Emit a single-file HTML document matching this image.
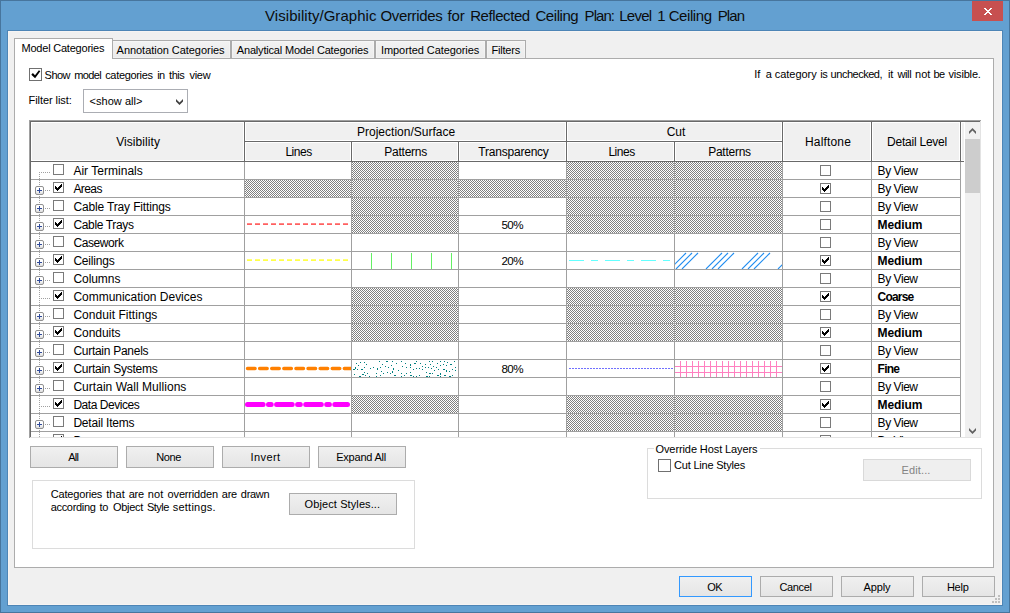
<!DOCTYPE html>
<html><head><meta charset="utf-8"><title>Visibility/Graphic Overrides</title>
<style>
html,body{margin:0;padding:0;}
body{width:1010px;height:613px;overflow:hidden;position:relative;background:#63a0d1;font-family:'Liberation Sans',sans-serif;}
div,span.t,svg{position:absolute;box-sizing:border-box;}
span.t{white-space:nowrap;}

.btn{border:1px solid #acacac;background:linear-gradient(#f0f0f0,#e5e5e5);}
.tab{border:1px solid #acacac;background:linear-gradient(#f2f2f2,#ebebeb);box-shadow:inset 0 0 0 1px rgba(255,255,255,.3);}
.hd{background:#f0f0f0;border:1px solid #fff;}
.ht{background:#808080;}
.cb{border:1px solid #7a7a7a;background:#fff;}

</style></head><body>
<div style="left:0px;top:0px;width:1010px;height:613px;border:1px solid #47759d;"></div>
<span class="t" style="left:265.10px;top:5.80px;font-size:15px;line-height:20px;color:#0c0c0c;letter-spacing:0.044px;">Visibility/Graphic</span>
<span class="t" style="left:380.50px;top:5.80px;font-size:15px;line-height:20px;color:#0c0c0c;letter-spacing:-0.348px;">Overrides</span>
<span class="t" style="left:447.40px;top:5.80px;font-size:15px;line-height:20px;color:#0c0c0c;letter-spacing:-0.105px;">for</span>
<span class="t" style="left:470.20px;top:5.80px;font-size:15px;line-height:20px;color:#0c0c0c;letter-spacing:-0.419px;">Reflected</span>
<span class="t" style="left:535.40px;top:5.80px;font-size:15px;line-height:20px;color:#0c0c0c;letter-spacing:-0.423px;">Ceiling</span>
<span class="t" style="left:584.60px;top:5.80px;font-size:15px;line-height:20px;color:#0c0c0c;letter-spacing:-0.941px;">Plan:</span>
<span class="t" style="left:619.20px;top:5.80px;font-size:15px;line-height:20px;color:#0c0c0c;letter-spacing:-0.712px;">Level</span>
<span class="t" style="left:657.30px;top:5.80px;font-size:15px;line-height:20px;color:#0c0c0c;">1</span>
<span class="t" style="left:668.70px;top:5.80px;font-size:15px;line-height:20px;color:#0c0c0c;letter-spacing:-0.423px;">Ceiling</span>
<span class="t" style="left:717.70px;top:5.80px;font-size:15px;line-height:20px;color:#0c0c0c;letter-spacing:-0.833px;">Plan</span>
<div style="left:972px;top:1px;width:31px;height:20px;background:#c75050;"></div>
<svg style="left:984px;top:8px" width="8" height="7" viewBox="0 0 8 7" shape-rendering="crispEdges" fill="#fff"><rect x="0" y="0" width="2" height="1"/><rect x="6" y="0" width="2" height="1"/><rect x="1" y="1" width="2" height="1"/><rect x="5" y="1" width="2" height="1"/><rect x="2" y="2" width="4" height="1"/><rect x="3" y="3" width="2" height="1"/><rect x="2" y="4" width="4" height="1"/><rect x="1" y="5" width="2" height="1"/><rect x="5" y="5" width="2" height="1"/><rect x="0" y="6" width="2" height="1"/><rect x="6" y="6" width="2" height="1"/></svg>
<div style="left:7px;top:30px;width:996px;height:576px;background:#f0f0f0;border:1px solid #4d85b6;box-shadow:inset 0 0 0 1px #f6f4f3;"></div>
<div style="left:14px;top:58px;width:980px;height:510px;background:#fff;border:1px solid #acacac;"></div>
<div class="tab" style="left:111px;top:40px;width:120px;height:19px"></div>
<span class="t" style="left:116.60px;top:43.19px;font-size:11px;line-height:14px;color:#000;letter-spacing:-0.041px;">Annotation Categories</span>
<div class="tab" style="left:231px;top:40px;width:144px;height:19px"></div>
<span class="t" style="left:236.80px;top:43.19px;font-size:11px;line-height:14px;color:#000;letter-spacing:-0.180px;">Analytical Model Categories</span>
<div class="tab" style="left:375px;top:40px;width:111px;height:19px"></div>
<span class="t" style="left:381.00px;top:43.19px;font-size:11px;line-height:14px;color:#000;letter-spacing:-0.077px;">Imported Categories</span>
<div class="tab" style="left:486px;top:40px;width:40px;height:19px"></div>
<span class="t" style="left:491.50px;top:43.19px;font-size:11px;line-height:14px;color:#000;letter-spacing:-0.208px;">Filters</span>
<div style="left:14px;top:38px;width:99px;height:21px;background:#fff;border:1px solid #acacac;border-bottom:none"></div>
<span class="t" style="left:21.50px;top:41.19px;font-size:11px;line-height:14px;color:#000;letter-spacing:-0.214px;">Model Categories</span>
<div style="left:29px;top:68px;width:13px;height:13px;background:#fff;border:1px solid #707070"></div>
<svg style="left:29px;top:68px" width="13" height="13" viewBox="0 0 13 13"><polygon points="2.3,6.7 3.9,5.0 6,7.3 9.9,2.2 11.3,3.3 6.1,10.2" fill="#000"/></svg>
<span class="t" style="left:44.60px;top:68.19px;font-size:11px;line-height:14px;color:#000;letter-spacing:-0.533px;">Show</span>
<span class="t" style="left:74.30px;top:68.19px;font-size:11px;line-height:14px;color:#000;letter-spacing:-0.654px;">model</span>
<span class="t" style="left:105.20px;top:68.19px;font-size:11px;line-height:14px;color:#000;letter-spacing:-0.327px;">categories</span>
<span class="t" style="left:157.20px;top:68.19px;font-size:11px;line-height:14px;color:#000;letter-spacing:-0.581px;">in</span>
<span class="t" style="left:169.00px;top:68.19px;font-size:11px;line-height:14px;color:#000;letter-spacing:-0.431px;">this</span>
<span class="t" style="left:189.40px;top:68.19px;font-size:11px;line-height:14px;color:#000;letter-spacing:-0.254px;">view</span>
<span class="t" style="left:754.20px;top:67.19px;font-size:11px;line-height:14px;color:#000;letter-spacing:-0.113px;">If</span>
<span class="t" style="left:765.70px;top:67.19px;font-size:11px;line-height:14px;color:#000;">a</span>
<span class="t" style="left:774.70px;top:67.19px;font-size:11px;line-height:14px;color:#000;letter-spacing:-0.025px;">category</span>
<span class="t" style="left:820.30px;top:67.19px;font-size:11px;line-height:14px;color:#000;letter-spacing:-0.377px;">is</span>
<span class="t" style="left:830.60px;top:67.19px;font-size:11px;line-height:14px;color:#000;letter-spacing:-0.477px;">unchecked,</span>
<span class="t" style="left:888.00px;top:67.19px;font-size:11px;line-height:14px;color:#000;letter-spacing:-0.150px;">it</span>
<span class="t" style="left:897.50px;top:67.19px;font-size:11px;line-height:14px;color:#000;letter-spacing:-0.395px;">will</span>
<span class="t" style="left:915.00px;top:67.19px;font-size:11px;line-height:14px;color:#000;letter-spacing:0.068px;">not</span>
<span class="t" style="left:933.60px;top:67.19px;font-size:11px;line-height:14px;color:#000;letter-spacing:-0.625px;">be</span>
<span class="t" style="left:948.50px;top:67.19px;font-size:11px;line-height:14px;color:#000;letter-spacing:-0.178px;">visible.</span>
<span class="t" style="left:28.50px;top:93.19px;font-size:11px;line-height:14px;color:#000;letter-spacing:-0.058px;">Filter list:</span>
<div style="left:83px;top:89px;width:105px;height:24px;background:#fff;border:1px solid #abadb3"></div>
<span class="t" style="left:89.60px;top:94.19px;font-size:11px;line-height:14px;color:#000;letter-spacing:0.021px;">&lt;show all&gt;</span>
<svg style="left:175px;top:97px" width="10" height="10" viewBox="0 0 10 10"><polygon points="1,2 4.5,5.5 8,2 8,4.5 4.5,8 1,4.5" fill="#404040"/></svg>
<div style="left:29px;top:120px;width:953px;height:318px;background:#fff;"></div>
<div style="left:29px;top:120px;width:953px;height:1px;background:#a0a0a0;"></div>
<div style="left:29px;top:121px;width:953px;height:1px;background:#696969;"></div>
<div style="left:29px;top:120px;width:1px;height:318px;background:#a0a0a0;"></div>
<div style="left:30px;top:121px;width:1px;height:317px;background:#696969;"></div>
<div style="left:30px;top:437px;width:951px;height:1px;background:#e3e3e3;"></div>
<div style="left:980px;top:121px;width:1px;height:317px;background:#e3e3e3;"></div>
<div style="left:981px;top:120px;width:1px;height:318px;background:#fff;"></div>
<div style="left:31px;top:122px;width:930px;height:39px;background:#f0f0f0;"></div>
<div style="left:961px;top:122px;width:4px;height:39px;background:#fff;"></div>
<div style="left:962px;top:123px;width:2px;height:37px;background:#f0f0f0;"></div>
<div class="hd" style="left:31px;top:122px;width:213px;height:39px"></div>
<div class="hd" style="left:245px;top:122px;width:321px;height:19px"></div>
<div class="hd" style="left:567px;top:122px;width:215px;height:19px"></div>
<div class="hd" style="left:783px;top:122px;width:88px;height:39px"></div>
<div class="hd" style="left:872px;top:122px;width:88px;height:39px"></div>
<div class="hd" style="left:245px;top:142px;width:106px;height:19px"></div>
<div class="hd" style="left:352px;top:142px;width:106px;height:19px"></div>
<div class="hd" style="left:459px;top:142px;width:107px;height:19px"></div>
<div class="hd" style="left:567px;top:142px;width:107px;height:19px"></div>
<div class="hd" style="left:675px;top:142px;width:107px;height:19px"></div>
<div style="left:245px;top:141px;width:537px;height:1px;background:#696969;"></div>
<div style="left:31px;top:161px;width:933px;height:1px;background:#696969;"></div>
<div style="left:244px;top:122px;width:1px;height:39px;background:#696969;"></div>
<div style="left:566px;top:122px;width:1px;height:39px;background:#696969;"></div>
<div style="left:782px;top:122px;width:1px;height:39px;background:#696969;"></div>
<div style="left:871px;top:122px;width:1px;height:39px;background:#696969;"></div>
<div style="left:960px;top:122px;width:1px;height:39px;background:#696969;"></div>
<div style="left:351px;top:142px;width:1px;height:19px;background:#696969;"></div>
<div style="left:458px;top:142px;width:1px;height:19px;background:#696969;"></div>
<div style="left:674px;top:142px;width:1px;height:19px;background:#696969;"></div>
<span class="t" style="left:116.20px;top:133.84px;font-size:12px;line-height:16px;color:#000;letter-spacing:0.067px;">Visibility</span>
<span class="t" style="left:357.00px;top:123.84px;font-size:12px;line-height:16px;color:#000;letter-spacing:0.008px;">Projection/Surface</span>
<span class="t" style="left:666.65px;top:123.84px;font-size:12px;line-height:16px;color:#000;letter-spacing:0.004px;">Cut</span>
<span class="t" style="left:285.40px;top:143.84px;font-size:12px;line-height:16px;color:#000;letter-spacing:-0.458px;">Lines</span>
<span class="t" style="left:384.35px;top:143.84px;font-size:12px;line-height:16px;color:#000;letter-spacing:-0.250px;">Patterns</span>
<span class="t" style="left:478.35px;top:143.84px;font-size:12px;line-height:16px;color:#000;letter-spacing:-0.218px;">Transparency</span>
<span class="t" style="left:608.40px;top:143.84px;font-size:12px;line-height:16px;color:#000;letter-spacing:-0.458px;">Lines</span>
<span class="t" style="left:708.15px;top:143.84px;font-size:12px;line-height:16px;color:#000;letter-spacing:-0.250px;">Patterns</span>
<span class="t" style="left:805.00px;top:133.84px;font-size:12px;line-height:16px;color:#000;letter-spacing:0.162px;">Halftone</span>
<span class="t" style="left:887.00px;top:133.84px;font-size:12px;line-height:16px;color:#000;letter-spacing:-0.225px;">Detail Level</span>
<div style="left:31px;top:162px;width:930px;height:275px;overflow:hidden">
<div style="left:8px;top:10px;width:1px;height:270px;background-image:linear-gradient(#a0a0a0 50%,transparent 50%);background-size:1px 2px"></div>
<div style="left:0;top:17px;width:930px;height:1px;background:#a0a0a0"></div>
<div style="left:321px;top:0px;width:106px;height:17px;background-image:repeating-conic-gradient(#808080 0% 25%, #fff 0% 50%);background-size:2px 2px;background-position:1px 0px"></div>
<div style="left:536px;top:0px;width:107px;height:17px;background-image:repeating-conic-gradient(#808080 0% 25%, #fff 0% 50%);background-size:2px 2px;background-position:0px 0px"></div>
<div style="left:644px;top:0px;width:107px;height:17px;background-image:repeating-conic-gradient(#808080 0% 25%, #fff 0% 50%);background-size:2px 2px;background-position:0px 0px"></div>
<div style="left:10px;top:10px;width:10px;height:1px;background-image:linear-gradient(90deg,#a0a0a0 50%,transparent 50%);background-size:2px 1px"></div>

<div class="cb" style="left:22px;top:2px;width:11px;height:11px"></div>
<div class="cb" style="left:789px;top:3px;width:11px;height:11px"></div>
<div style="left:0;top:35px;width:930px;height:1px;background:#a0a0a0"></div>
<div style="left:214px;top:18px;width:106px;height:17px;background-image:repeating-conic-gradient(#808080 0% 25%, #fff 0% 50%);background-size:2px 2px;background-position:0px 0px"></div>
<div style="left:321px;top:18px;width:106px;height:17px;background-image:repeating-conic-gradient(#808080 0% 25%, #fff 0% 50%);background-size:2px 2px;background-position:1px 0px"></div>
<div style="left:428px;top:18px;width:107px;height:17px;background-image:repeating-conic-gradient(#808080 0% 25%, #fff 0% 50%);background-size:2px 2px;background-position:0px 0px"></div>
<div style="left:536px;top:18px;width:107px;height:17px;background-image:repeating-conic-gradient(#808080 0% 25%, #fff 0% 50%);background-size:2px 2px;background-position:0px 0px"></div>
<div style="left:644px;top:18px;width:107px;height:17px;background-image:repeating-conic-gradient(#808080 0% 25%, #fff 0% 50%);background-size:2px 2px;background-position:0px 0px"></div>
<div style="left:4px;top:24px;width:9px;height:9px;border:1px solid #919191;border-radius:2px;background:linear-gradient(#fff 40%,#dcdcdc)"></div>
<div style="left:6px;top:28px;width:5px;height:1px;background:#2f4a9a"></div>
<div style="left:8px;top:26px;width:1px;height:5px;background:#2f4a9a"></div>
<div style="left:14px;top:28px;width:6px;height:1px;background-image:linear-gradient(90deg,#a0a0a0 50%,transparent 50%);background-size:2px 1px"></div>

<div class="cb" style="left:22px;top:20px;width:11px;height:11px"></div>
<svg style="left:22px;top:20px" width="11" height="11" viewBox="0 0 11 11" shape-rendering="crispEdges" fill="#000"><rect x="2" y="4" width="1" height="3"/><rect x="3" y="5" width="1" height="3"/><rect x="4" y="6" width="1" height="3"/><rect x="5" y="5" width="1" height="3"/><rect x="6" y="4" width="1" height="3"/><rect x="7" y="3" width="1" height="3"/><rect x="8" y="2" width="1" height="3"/></svg>
<div class="cb" style="left:789px;top:21px;width:11px;height:11px"></div>
<svg style="left:789px;top:21px" width="11" height="11" viewBox="0 0 11 11" shape-rendering="crispEdges" fill="#000"><rect x="2" y="4" width="1" height="3"/><rect x="3" y="5" width="1" height="3"/><rect x="4" y="6" width="1" height="3"/><rect x="5" y="5" width="1" height="3"/><rect x="6" y="4" width="1" height="3"/><rect x="7" y="3" width="1" height="3"/><rect x="8" y="2" width="1" height="3"/></svg>
<div style="left:0;top:53px;width:930px;height:1px;background:#a0a0a0"></div>
<div style="left:321px;top:36px;width:106px;height:17px;background-image:repeating-conic-gradient(#808080 0% 25%, #fff 0% 50%);background-size:2px 2px;background-position:1px 0px"></div>
<div style="left:536px;top:36px;width:107px;height:17px;background-image:repeating-conic-gradient(#808080 0% 25%, #fff 0% 50%);background-size:2px 2px;background-position:0px 0px"></div>
<div style="left:644px;top:36px;width:107px;height:17px;background-image:repeating-conic-gradient(#808080 0% 25%, #fff 0% 50%);background-size:2px 2px;background-position:0px 0px"></div>
<div style="left:4px;top:42px;width:9px;height:9px;border:1px solid #919191;border-radius:2px;background:linear-gradient(#fff 40%,#dcdcdc)"></div>
<div style="left:6px;top:46px;width:5px;height:1px;background:#2f4a9a"></div>
<div style="left:8px;top:44px;width:1px;height:5px;background:#2f4a9a"></div>
<div style="left:14px;top:46px;width:6px;height:1px;background-image:linear-gradient(90deg,#a0a0a0 50%,transparent 50%);background-size:2px 1px"></div>

<div class="cb" style="left:22px;top:38px;width:11px;height:11px"></div>
<div class="cb" style="left:789px;top:39px;width:11px;height:11px"></div>
<div style="left:0;top:71px;width:930px;height:1px;background:#a0a0a0"></div>
<div style="left:321px;top:54px;width:106px;height:17px;background-image:repeating-conic-gradient(#808080 0% 25%, #fff 0% 50%);background-size:2px 2px;background-position:1px 0px"></div>
<div style="left:536px;top:54px;width:107px;height:17px;background-image:repeating-conic-gradient(#808080 0% 25%, #fff 0% 50%);background-size:2px 2px;background-position:0px 0px"></div>
<div style="left:644px;top:54px;width:107px;height:17px;background-image:repeating-conic-gradient(#808080 0% 25%, #fff 0% 50%);background-size:2px 2px;background-position:0px 0px"></div>
<div style="left:4px;top:60px;width:9px;height:9px;border:1px solid #919191;border-radius:2px;background:linear-gradient(#fff 40%,#dcdcdc)"></div>
<div style="left:6px;top:64px;width:5px;height:1px;background:#2f4a9a"></div>
<div style="left:8px;top:62px;width:1px;height:5px;background:#2f4a9a"></div>
<div style="left:14px;top:64px;width:6px;height:1px;background-image:linear-gradient(90deg,#a0a0a0 50%,transparent 50%);background-size:2px 1px"></div>

<div class="cb" style="left:22px;top:56px;width:11px;height:11px"></div>
<svg style="left:22px;top:56px" width="11" height="11" viewBox="0 0 11 11" shape-rendering="crispEdges" fill="#000"><rect x="2" y="4" width="1" height="3"/><rect x="3" y="5" width="1" height="3"/><rect x="4" y="6" width="1" height="3"/><rect x="5" y="5" width="1" height="3"/><rect x="6" y="4" width="1" height="3"/><rect x="7" y="3" width="1" height="3"/><rect x="8" y="2" width="1" height="3"/></svg>
<div class="cb" style="left:789px;top:57px;width:11px;height:11px"></div>
<div style="left:0;top:89px;width:930px;height:1px;background:#a0a0a0"></div>
<div style="left:4px;top:78px;width:9px;height:9px;border:1px solid #919191;border-radius:2px;background:linear-gradient(#fff 40%,#dcdcdc)"></div>
<div style="left:6px;top:82px;width:5px;height:1px;background:#2f4a9a"></div>
<div style="left:8px;top:80px;width:1px;height:5px;background:#2f4a9a"></div>
<div style="left:14px;top:82px;width:6px;height:1px;background-image:linear-gradient(90deg,#a0a0a0 50%,transparent 50%);background-size:2px 1px"></div>

<div class="cb" style="left:22px;top:74px;width:11px;height:11px"></div>
<div class="cb" style="left:789px;top:75px;width:11px;height:11px"></div>
<div style="left:0;top:107px;width:930px;height:1px;background:#a0a0a0"></div>
<div style="left:4px;top:96px;width:9px;height:9px;border:1px solid #919191;border-radius:2px;background:linear-gradient(#fff 40%,#dcdcdc)"></div>
<div style="left:6px;top:100px;width:5px;height:1px;background:#2f4a9a"></div>
<div style="left:8px;top:98px;width:1px;height:5px;background:#2f4a9a"></div>
<div style="left:14px;top:100px;width:6px;height:1px;background-image:linear-gradient(90deg,#a0a0a0 50%,transparent 50%);background-size:2px 1px"></div>

<div class="cb" style="left:22px;top:92px;width:11px;height:11px"></div>
<svg style="left:22px;top:92px" width="11" height="11" viewBox="0 0 11 11" shape-rendering="crispEdges" fill="#000"><rect x="2" y="4" width="1" height="3"/><rect x="3" y="5" width="1" height="3"/><rect x="4" y="6" width="1" height="3"/><rect x="5" y="5" width="1" height="3"/><rect x="6" y="4" width="1" height="3"/><rect x="7" y="3" width="1" height="3"/><rect x="8" y="2" width="1" height="3"/></svg>
<div class="cb" style="left:789px;top:93px;width:11px;height:11px"></div>
<svg style="left:789px;top:93px" width="11" height="11" viewBox="0 0 11 11" shape-rendering="crispEdges" fill="#000"><rect x="2" y="4" width="1" height="3"/><rect x="3" y="5" width="1" height="3"/><rect x="4" y="6" width="1" height="3"/><rect x="5" y="5" width="1" height="3"/><rect x="6" y="4" width="1" height="3"/><rect x="7" y="3" width="1" height="3"/><rect x="8" y="2" width="1" height="3"/></svg>
<div style="left:0;top:125px;width:930px;height:1px;background:#a0a0a0"></div>
<div style="left:4px;top:114px;width:9px;height:9px;border:1px solid #919191;border-radius:2px;background:linear-gradient(#fff 40%,#dcdcdc)"></div>
<div style="left:6px;top:118px;width:5px;height:1px;background:#2f4a9a"></div>
<div style="left:8px;top:116px;width:1px;height:5px;background:#2f4a9a"></div>
<div style="left:14px;top:118px;width:6px;height:1px;background-image:linear-gradient(90deg,#a0a0a0 50%,transparent 50%);background-size:2px 1px"></div>

<div class="cb" style="left:22px;top:110px;width:11px;height:11px"></div>
<div class="cb" style="left:789px;top:111px;width:11px;height:11px"></div>
<div style="left:0;top:143px;width:930px;height:1px;background:#a0a0a0"></div>
<div style="left:321px;top:126px;width:106px;height:17px;background-image:repeating-conic-gradient(#808080 0% 25%, #fff 0% 50%);background-size:2px 2px;background-position:1px 0px"></div>
<div style="left:536px;top:126px;width:107px;height:17px;background-image:repeating-conic-gradient(#808080 0% 25%, #fff 0% 50%);background-size:2px 2px;background-position:0px 0px"></div>
<div style="left:644px;top:126px;width:107px;height:17px;background-image:repeating-conic-gradient(#808080 0% 25%, #fff 0% 50%);background-size:2px 2px;background-position:0px 0px"></div>
<div style="left:10px;top:136px;width:10px;height:1px;background-image:linear-gradient(90deg,#a0a0a0 50%,transparent 50%);background-size:2px 1px"></div>

<div class="cb" style="left:22px;top:128px;width:11px;height:11px"></div>
<svg style="left:22px;top:128px" width="11" height="11" viewBox="0 0 11 11" shape-rendering="crispEdges" fill="#000"><rect x="2" y="4" width="1" height="3"/><rect x="3" y="5" width="1" height="3"/><rect x="4" y="6" width="1" height="3"/><rect x="5" y="5" width="1" height="3"/><rect x="6" y="4" width="1" height="3"/><rect x="7" y="3" width="1" height="3"/><rect x="8" y="2" width="1" height="3"/></svg>
<div class="cb" style="left:789px;top:129px;width:11px;height:11px"></div>
<svg style="left:789px;top:129px" width="11" height="11" viewBox="0 0 11 11" shape-rendering="crispEdges" fill="#000"><rect x="2" y="4" width="1" height="3"/><rect x="3" y="5" width="1" height="3"/><rect x="4" y="6" width="1" height="3"/><rect x="5" y="5" width="1" height="3"/><rect x="6" y="4" width="1" height="3"/><rect x="7" y="3" width="1" height="3"/><rect x="8" y="2" width="1" height="3"/></svg>
<div style="left:0;top:161px;width:930px;height:1px;background:#a0a0a0"></div>
<div style="left:321px;top:144px;width:106px;height:17px;background-image:repeating-conic-gradient(#808080 0% 25%, #fff 0% 50%);background-size:2px 2px;background-position:1px 0px"></div>
<div style="left:536px;top:144px;width:107px;height:17px;background-image:repeating-conic-gradient(#808080 0% 25%, #fff 0% 50%);background-size:2px 2px;background-position:0px 0px"></div>
<div style="left:644px;top:144px;width:107px;height:17px;background-image:repeating-conic-gradient(#808080 0% 25%, #fff 0% 50%);background-size:2px 2px;background-position:0px 0px"></div>
<div style="left:4px;top:150px;width:9px;height:9px;border:1px solid #919191;border-radius:2px;background:linear-gradient(#fff 40%,#dcdcdc)"></div>
<div style="left:6px;top:154px;width:5px;height:1px;background:#2f4a9a"></div>
<div style="left:8px;top:152px;width:1px;height:5px;background:#2f4a9a"></div>
<div style="left:14px;top:154px;width:6px;height:1px;background-image:linear-gradient(90deg,#a0a0a0 50%,transparent 50%);background-size:2px 1px"></div>

<div class="cb" style="left:22px;top:146px;width:11px;height:11px"></div>
<div class="cb" style="left:789px;top:147px;width:11px;height:11px"></div>
<div style="left:0;top:179px;width:930px;height:1px;background:#a0a0a0"></div>
<div style="left:321px;top:162px;width:106px;height:17px;background-image:repeating-conic-gradient(#808080 0% 25%, #fff 0% 50%);background-size:2px 2px;background-position:1px 0px"></div>
<div style="left:536px;top:162px;width:107px;height:17px;background-image:repeating-conic-gradient(#808080 0% 25%, #fff 0% 50%);background-size:2px 2px;background-position:0px 0px"></div>
<div style="left:644px;top:162px;width:107px;height:17px;background-image:repeating-conic-gradient(#808080 0% 25%, #fff 0% 50%);background-size:2px 2px;background-position:0px 0px"></div>
<div style="left:4px;top:168px;width:9px;height:9px;border:1px solid #919191;border-radius:2px;background:linear-gradient(#fff 40%,#dcdcdc)"></div>
<div style="left:6px;top:172px;width:5px;height:1px;background:#2f4a9a"></div>
<div style="left:8px;top:170px;width:1px;height:5px;background:#2f4a9a"></div>
<div style="left:14px;top:172px;width:6px;height:1px;background-image:linear-gradient(90deg,#a0a0a0 50%,transparent 50%);background-size:2px 1px"></div>

<div class="cb" style="left:22px;top:164px;width:11px;height:11px"></div>
<svg style="left:22px;top:164px" width="11" height="11" viewBox="0 0 11 11" shape-rendering="crispEdges" fill="#000"><rect x="2" y="4" width="1" height="3"/><rect x="3" y="5" width="1" height="3"/><rect x="4" y="6" width="1" height="3"/><rect x="5" y="5" width="1" height="3"/><rect x="6" y="4" width="1" height="3"/><rect x="7" y="3" width="1" height="3"/><rect x="8" y="2" width="1" height="3"/></svg>
<div class="cb" style="left:789px;top:165px;width:11px;height:11px"></div>
<svg style="left:789px;top:165px" width="11" height="11" viewBox="0 0 11 11" shape-rendering="crispEdges" fill="#000"><rect x="2" y="4" width="1" height="3"/><rect x="3" y="5" width="1" height="3"/><rect x="4" y="6" width="1" height="3"/><rect x="5" y="5" width="1" height="3"/><rect x="6" y="4" width="1" height="3"/><rect x="7" y="3" width="1" height="3"/><rect x="8" y="2" width="1" height="3"/></svg>
<div style="left:0;top:197px;width:930px;height:1px;background:#a0a0a0"></div>
<div style="left:4px;top:186px;width:9px;height:9px;border:1px solid #919191;border-radius:2px;background:linear-gradient(#fff 40%,#dcdcdc)"></div>
<div style="left:6px;top:190px;width:5px;height:1px;background:#2f4a9a"></div>
<div style="left:8px;top:188px;width:1px;height:5px;background:#2f4a9a"></div>
<div style="left:14px;top:190px;width:6px;height:1px;background-image:linear-gradient(90deg,#a0a0a0 50%,transparent 50%);background-size:2px 1px"></div>

<div class="cb" style="left:22px;top:182px;width:11px;height:11px"></div>
<div class="cb" style="left:789px;top:183px;width:11px;height:11px"></div>
<div style="left:0;top:215px;width:930px;height:1px;background:#a0a0a0"></div>
<div style="left:4px;top:204px;width:9px;height:9px;border:1px solid #919191;border-radius:2px;background:linear-gradient(#fff 40%,#dcdcdc)"></div>
<div style="left:6px;top:208px;width:5px;height:1px;background:#2f4a9a"></div>
<div style="left:8px;top:206px;width:1px;height:5px;background:#2f4a9a"></div>
<div style="left:14px;top:208px;width:6px;height:1px;background-image:linear-gradient(90deg,#a0a0a0 50%,transparent 50%);background-size:2px 1px"></div>

<div class="cb" style="left:22px;top:200px;width:11px;height:11px"></div>
<svg style="left:22px;top:200px" width="11" height="11" viewBox="0 0 11 11" shape-rendering="crispEdges" fill="#000"><rect x="2" y="4" width="1" height="3"/><rect x="3" y="5" width="1" height="3"/><rect x="4" y="6" width="1" height="3"/><rect x="5" y="5" width="1" height="3"/><rect x="6" y="4" width="1" height="3"/><rect x="7" y="3" width="1" height="3"/><rect x="8" y="2" width="1" height="3"/></svg>
<div class="cb" style="left:789px;top:201px;width:11px;height:11px"></div>
<svg style="left:789px;top:201px" width="11" height="11" viewBox="0 0 11 11" shape-rendering="crispEdges" fill="#000"><rect x="2" y="4" width="1" height="3"/><rect x="3" y="5" width="1" height="3"/><rect x="4" y="6" width="1" height="3"/><rect x="5" y="5" width="1" height="3"/><rect x="6" y="4" width="1" height="3"/><rect x="7" y="3" width="1" height="3"/><rect x="8" y="2" width="1" height="3"/></svg>
<div style="left:0;top:233px;width:930px;height:1px;background:#a0a0a0"></div>
<div style="left:4px;top:222px;width:9px;height:9px;border:1px solid #919191;border-radius:2px;background:linear-gradient(#fff 40%,#dcdcdc)"></div>
<div style="left:6px;top:226px;width:5px;height:1px;background:#2f4a9a"></div>
<div style="left:8px;top:224px;width:1px;height:5px;background:#2f4a9a"></div>
<div style="left:14px;top:226px;width:6px;height:1px;background-image:linear-gradient(90deg,#a0a0a0 50%,transparent 50%);background-size:2px 1px"></div>

<div class="cb" style="left:22px;top:218px;width:11px;height:11px"></div>
<div class="cb" style="left:789px;top:219px;width:11px;height:11px"></div>
<div style="left:0;top:251px;width:930px;height:1px;background:#a0a0a0"></div>
<div style="left:321px;top:234px;width:106px;height:17px;background-image:repeating-conic-gradient(#808080 0% 25%, #fff 0% 50%);background-size:2px 2px;background-position:1px 0px"></div>
<div style="left:536px;top:234px;width:107px;height:17px;background-image:repeating-conic-gradient(#808080 0% 25%, #fff 0% 50%);background-size:2px 2px;background-position:0px 0px"></div>
<div style="left:644px;top:234px;width:107px;height:17px;background-image:repeating-conic-gradient(#808080 0% 25%, #fff 0% 50%);background-size:2px 2px;background-position:0px 0px"></div>
<div style="left:10px;top:244px;width:10px;height:1px;background-image:linear-gradient(90deg,#a0a0a0 50%,transparent 50%);background-size:2px 1px"></div>

<div class="cb" style="left:22px;top:236px;width:11px;height:11px"></div>
<svg style="left:22px;top:236px" width="11" height="11" viewBox="0 0 11 11" shape-rendering="crispEdges" fill="#000"><rect x="2" y="4" width="1" height="3"/><rect x="3" y="5" width="1" height="3"/><rect x="4" y="6" width="1" height="3"/><rect x="5" y="5" width="1" height="3"/><rect x="6" y="4" width="1" height="3"/><rect x="7" y="3" width="1" height="3"/><rect x="8" y="2" width="1" height="3"/></svg>
<div class="cb" style="left:789px;top:237px;width:11px;height:11px"></div>
<svg style="left:789px;top:237px" width="11" height="11" viewBox="0 0 11 11" shape-rendering="crispEdges" fill="#000"><rect x="2" y="4" width="1" height="3"/><rect x="3" y="5" width="1" height="3"/><rect x="4" y="6" width="1" height="3"/><rect x="5" y="5" width="1" height="3"/><rect x="6" y="4" width="1" height="3"/><rect x="7" y="3" width="1" height="3"/><rect x="8" y="2" width="1" height="3"/></svg>
<div style="left:0;top:269px;width:930px;height:1px;background:#a0a0a0"></div>
<div style="left:536px;top:252px;width:107px;height:17px;background-image:repeating-conic-gradient(#808080 0% 25%, #fff 0% 50%);background-size:2px 2px;background-position:0px 0px"></div>
<div style="left:644px;top:252px;width:107px;height:17px;background-image:repeating-conic-gradient(#808080 0% 25%, #fff 0% 50%);background-size:2px 2px;background-position:0px 0px"></div>
<div style="left:4px;top:258px;width:9px;height:9px;border:1px solid #919191;border-radius:2px;background:linear-gradient(#fff 40%,#dcdcdc)"></div>
<div style="left:6px;top:262px;width:5px;height:1px;background:#2f4a9a"></div>
<div style="left:8px;top:260px;width:1px;height:5px;background:#2f4a9a"></div>
<div style="left:14px;top:262px;width:6px;height:1px;background-image:linear-gradient(90deg,#a0a0a0 50%,transparent 50%);background-size:2px 1px"></div>

<div class="cb" style="left:22px;top:254px;width:11px;height:11px"></div>
<div class="cb" style="left:789px;top:255px;width:11px;height:11px"></div>
<div style="left:0;top:287px;width:930px;height:1px;background:#a0a0a0"></div>
<div style="left:4px;top:276px;width:9px;height:9px;border:1px solid #919191;border-radius:2px;background:linear-gradient(#fff 40%,#dcdcdc)"></div>
<div style="left:6px;top:280px;width:5px;height:1px;background:#2f4a9a"></div>
<div style="left:8px;top:278px;width:1px;height:5px;background:#2f4a9a"></div>
<div style="left:14px;top:280px;width:6px;height:1px;background-image:linear-gradient(90deg,#a0a0a0 50%,transparent 50%);background-size:2px 1px"></div>

<div class="cb" style="left:22px;top:272px;width:11px;height:11px"></div>
<svg style="left:22px;top:272px" width="11" height="11" viewBox="0 0 11 11" shape-rendering="crispEdges" fill="#000"><rect x="2" y="4" width="1" height="3"/><rect x="3" y="5" width="1" height="3"/><rect x="4" y="6" width="1" height="3"/><rect x="5" y="5" width="1" height="3"/><rect x="6" y="4" width="1" height="3"/><rect x="7" y="3" width="1" height="3"/><rect x="8" y="2" width="1" height="3"/></svg>
<div class="cb" style="left:789px;top:273px;width:11px;height:11px"></div>
<svg style="left:789px;top:273px" width="11" height="11" viewBox="0 0 11 11" shape-rendering="crispEdges" fill="#000"><rect x="2" y="4" width="1" height="3"/><rect x="3" y="5" width="1" height="3"/><rect x="4" y="6" width="1" height="3"/><rect x="5" y="5" width="1" height="3"/><rect x="6" y="4" width="1" height="3"/><rect x="7" y="3" width="1" height="3"/><rect x="8" y="2" width="1" height="3"/></svg>
<div style="left:213px;top:0;width:1px;height:275px;background:#a0a0a0"></div>
<div style="left:320px;top:0;width:1px;height:275px;background:#a0a0a0"></div>
<div style="left:427px;top:0;width:1px;height:275px;background:#a0a0a0"></div>
<div style="left:535px;top:0;width:1px;height:275px;background:#a0a0a0"></div>
<div style="left:643px;top:0;width:1px;height:275px;background:#a0a0a0"></div>
<div style="left:751px;top:0;width:1px;height:275px;background:#a0a0a0"></div>
<div style="left:840px;top:0;width:1px;height:275px;background:#a0a0a0"></div>
<div style="left:929px;top:0;width:1px;height:275px;background:#a0a0a0"></div>
</div>
<span class="t" style="left:73.40px;top:162.84px;font-size:12px;line-height:16px;color:#000;letter-spacing:0.020px;">Air Terminals</span>
<span class="t" style="left:877.60px;top:162.84px;font-size:12px;line-height:16px;color:#000;letter-spacing:-0.449px;">By View</span>
<span class="t" style="left:73.40px;top:180.84px;font-size:12px;line-height:16px;color:#000;letter-spacing:-0.572px;">Areas</span>
<span class="t" style="left:877.60px;top:180.84px;font-size:12px;line-height:16px;color:#000;letter-spacing:-0.449px;">By View</span>
<span class="t" style="left:73.40px;top:198.84px;font-size:12px;line-height:16px;color:#000;letter-spacing:-0.145px;">Cable Tray Fittings</span>
<span class="t" style="left:877.60px;top:198.84px;font-size:12px;line-height:16px;color:#000;letter-spacing:-0.449px;">By View</span>
<span class="t" style="left:73.40px;top:216.84px;font-size:12px;line-height:16px;color:#000;letter-spacing:-0.339px;">Cable Trays</span>
<span class="t" style="left:877.60px;top:216.84px;font-size:12px;line-height:16px;color:#000;font-weight:700;letter-spacing:-0.091px;">Medium</span>
<span class="t" style="left:73.40px;top:234.84px;font-size:12px;line-height:16px;color:#000;letter-spacing:-0.395px;">Casework</span>
<span class="t" style="left:877.60px;top:234.84px;font-size:12px;line-height:16px;color:#000;letter-spacing:-0.449px;">By View</span>
<span class="t" style="left:73.40px;top:252.84px;font-size:12px;line-height:16px;color:#000;letter-spacing:-0.198px;">Ceilings</span>
<span class="t" style="left:877.60px;top:252.84px;font-size:12px;line-height:16px;color:#000;font-weight:700;letter-spacing:-0.091px;">Medium</span>
<span class="t" style="left:73.40px;top:270.84px;font-size:12px;line-height:16px;color:#000;letter-spacing:-0.051px;">Columns</span>
<span class="t" style="left:877.60px;top:270.84px;font-size:12px;line-height:16px;color:#000;letter-spacing:-0.449px;">By View</span>
<span class="t" style="left:73.40px;top:288.84px;font-size:12px;line-height:16px;color:#000;letter-spacing:-0.019px;">Communication Devices</span>
<span class="t" style="left:877.60px;top:288.84px;font-size:12px;line-height:16px;color:#000;font-weight:700;letter-spacing:-0.798px;">Coarse</span>
<span class="t" style="left:73.40px;top:306.84px;font-size:12px;line-height:16px;color:#000;letter-spacing:0.039px;">Conduit Fittings</span>
<span class="t" style="left:877.60px;top:306.84px;font-size:12px;line-height:16px;color:#000;letter-spacing:-0.449px;">By View</span>
<span class="t" style="left:73.40px;top:324.84px;font-size:12px;line-height:16px;color:#000;letter-spacing:-0.047px;">Conduits</span>
<span class="t" style="left:877.60px;top:324.84px;font-size:12px;line-height:16px;color:#000;font-weight:700;letter-spacing:-0.091px;">Medium</span>
<span class="t" style="left:73.40px;top:342.84px;font-size:12px;line-height:16px;color:#000;letter-spacing:-0.273px;">Curtain Panels</span>
<span class="t" style="left:877.60px;top:342.84px;font-size:12px;line-height:16px;color:#000;letter-spacing:-0.449px;">By View</span>
<span class="t" style="left:73.40px;top:360.84px;font-size:12px;line-height:16px;color:#000;letter-spacing:-0.269px;">Curtain Systems</span>
<span class="t" style="left:877.60px;top:360.84px;font-size:12px;line-height:16px;color:#000;font-weight:700;letter-spacing:-0.793px;">Fine</span>
<span class="t" style="left:73.40px;top:378.84px;font-size:12px;line-height:16px;color:#000;letter-spacing:0.035px;">Curtain Wall Mullions</span>
<span class="t" style="left:877.60px;top:378.84px;font-size:12px;line-height:16px;color:#000;letter-spacing:-0.449px;">By View</span>
<span class="t" style="left:73.40px;top:396.84px;font-size:12px;line-height:16px;color:#000;letter-spacing:-0.448px;">Data Devices</span>
<span class="t" style="left:877.60px;top:396.84px;font-size:12px;line-height:16px;color:#000;font-weight:700;letter-spacing:-0.091px;">Medium</span>
<span class="t" style="left:73.40px;top:414.84px;font-size:12px;line-height:16px;color:#000;letter-spacing:-0.197px;">Detail Items</span>
<span class="t" style="left:877.60px;top:414.84px;font-size:12px;line-height:16px;color:#000;letter-spacing:-0.449px;">By View</span>
<span class="t" style="left:73.40px;top:432.84px;font-size:12px;line-height:16px;color:#000;letter-spacing:-0.003px;clip-path:inset(0 0 11.84px 0);">Doors</span>
<span class="t" style="left:877.60px;top:432.84px;font-size:12px;line-height:16px;color:#000;letter-spacing:-0.449px;clip-path:inset(0 0 11.84px 0);">By View</span>
<span class="t" style="left:501.60px;top:217.48px;font-size:11.6px;line-height:15px;color:#000;letter-spacing:-0.673px;">50%</span>
<span class="t" style="left:501.60px;top:253.48px;font-size:11.6px;line-height:15px;color:#000;letter-spacing:-0.673px;">20%</span>
<span class="t" style="left:501.60px;top:361.48px;font-size:11.6px;line-height:15px;color:#000;letter-spacing:-0.673px;">80%</span>
<svg style="left:245px;top:216px" width="106" height="17" viewBox="0 0 106 17"><line x1="2" y1="8.15" x2="103" y2="8.15" stroke="#ff6060" stroke-width="1.7" stroke-dasharray="5 3"/></svg>
<svg style="left:245px;top:252px" width="106" height="17" viewBox="0 0 106 17"><line x1="2" y1="8.15" x2="103" y2="8.15" stroke="#ffff48" stroke-width="1.7" stroke-dasharray="5 3"/></svg>
<svg style="left:352px;top:252px" width="106" height="17" viewBox="0 0 106 17"><line x1="19.5" y1="1" x2="19.5" y2="17" stroke="#64f064" stroke-width="1"/><line x1="39.5" y1="1" x2="39.5" y2="17" stroke="#64f064" stroke-width="1"/><line x1="59.5" y1="1" x2="59.5" y2="17" stroke="#64f064" stroke-width="1"/><line x1="79.5" y1="1" x2="79.5" y2="17" stroke="#64f064" stroke-width="1"/><line x1="99.5" y1="1" x2="99.5" y2="17" stroke="#64f064" stroke-width="1"/></svg>
<svg style="left:567px;top:252px" width="107" height="17" viewBox="0 0 107 17"><line x1="2" y1="8.5" x2="103" y2="8.5" stroke="#64ffff" stroke-width="1.15" stroke-dasharray="15 7 7 7"/></svg>
<svg style="left:675px;top:252px" width="107" height="17" viewBox="0 0 107 17"><line x1="-5" y1="17" x2="11" y2="1" stroke="#1e8cf0" stroke-width="1.1"/><line x1="1" y1="17" x2="17" y2="1" stroke="#1e8cf0" stroke-width="1.1"/><line x1="7" y1="17" x2="23" y2="1" stroke="#1e8cf0" stroke-width="1.1"/><line x1="31" y1="17" x2="47" y2="1" stroke="#1e8cf0" stroke-width="1.1"/><line x1="37" y1="17" x2="53" y2="1" stroke="#1e8cf0" stroke-width="1.1"/><line x1="43" y1="17" x2="59" y2="1" stroke="#1e8cf0" stroke-width="1.1"/><line x1="67" y1="17" x2="83" y2="1" stroke="#1e8cf0" stroke-width="1.1"/><line x1="73" y1="17" x2="89" y2="1" stroke="#1e8cf0" stroke-width="1.1"/><line x1="79" y1="17" x2="95" y2="1" stroke="#1e8cf0" stroke-width="1.1"/><line x1="103" y1="17" x2="119" y2="1" stroke="#1e8cf0" stroke-width="1.1"/></svg>
<svg style="left:245px;top:360px" width="106" height="17" viewBox="0 0 106 17"><line x1="2.5" y1="8.5" x2="110" y2="8.5" stroke="#ff8000" stroke-width="3.4" stroke-dasharray="7.6 4.5" stroke-linecap="round"/></svg>
<svg style="left:567px;top:360px" width="107" height="17" viewBox="0 0 107 17"><line x1="2" y1="8.5" x2="106" y2="8.5" stroke="#7070ff" stroke-width="1.2" stroke-dasharray="2 1"/></svg>
<svg style="left:352px;top:360px" width="106" height="17" viewBox="0 0 106 17"><rect x="58" y="15" width="2" height="1" fill="#008080"/><rect x="58" y="7" width="1" height="1" fill="#008080"/><rect x="24" y="16" width="1" height="1" fill="#008080"/><rect x="81" y="6" width="1" height="1" fill="#008080"/><rect x="13" y="15" width="1" height="1" fill="#008080"/><rect x="39" y="5" width="1" height="1" fill="#008080"/><rect x="12" y="2" width="1" height="1" fill="#008080"/><rect x="77" y="13" width="2" height="1" fill="#008080"/><rect x="80" y="1" width="1" height="1" fill="#008080"/><rect x="68" y="3" width="1" height="1" fill="#008080"/><rect x="8" y="2" width="1" height="1" fill="#008080"/><rect x="25" y="8" width="1" height="2" fill="#008080"/><rect x="77" y="1" width="1" height="1" fill="#008080"/><rect x="100" y="15" width="1" height="1" fill="#008080"/><rect x="42" y="15" width="2" height="1" fill="#008080"/><rect x="76" y="7" width="1" height="1" fill="#008080"/><rect x="67" y="8" width="1" height="1" fill="#008080"/><rect x="82" y="10" width="1" height="1" fill="#008080"/><rect x="64" y="1" width="1" height="1" fill="#008080"/><rect x="85" y="3" width="1" height="1" fill="#008080"/><rect x="53" y="3" width="1" height="1" fill="#008080"/><rect x="91" y="9" width="2" height="1" fill="#008080"/><rect x="41" y="8" width="1" height="2" fill="#008080"/><rect x="4" y="3" width="1" height="1" fill="#008080"/><rect x="73" y="4" width="1" height="1" fill="#008080"/><rect x="38" y="13" width="1" height="1" fill="#008080"/><rect x="88" y="1" width="1" height="1" fill="#008080"/><rect x="28" y="7" width="1" height="1" fill="#008080"/><rect x="7" y="16" width="2" height="1" fill="#008080"/><rect x="49" y="13" width="1" height="1" fill="#008080"/><rect x="73" y="7" width="1" height="1" fill="#008080"/><rect x="100" y="9" width="1" height="1" fill="#008080"/><rect x="44" y="3" width="1" height="1" fill="#008080"/><rect x="40" y="11" width="1" height="2" fill="#008080"/><rect x="2" y="14" width="1" height="1" fill="#008080"/><rect x="98" y="4" width="2" height="1" fill="#008080"/><rect x="18" y="8" width="1" height="1" fill="#008080"/><rect x="91" y="4" width="1" height="1" fill="#008080"/><rect x="94" y="5" width="1" height="1" fill="#008080"/><rect x="54" y="13" width="1" height="1" fill="#008080"/><rect x="15" y="13" width="1" height="1" fill="#008080"/><rect x="54" y="7" width="1" height="1" fill="#008080"/><rect x="1" y="9" width="2" height="1" fill="#008080"/><rect x="103" y="10" width="1" height="1" fill="#008080"/><rect x="3" y="7" width="1" height="2" fill="#008080"/><rect x="24" y="13" width="1" height="1" fill="#008080"/><rect x="78" y="4" width="1" height="1" fill="#008080"/><rect x="6" y="5" width="1" height="1" fill="#008080"/><rect x="28" y="15" width="1" height="1" fill="#008080"/><rect x="34" y="1" width="2" height="1" fill="#008080"/><rect x="12" y="7" width="1" height="1" fill="#008080"/><rect x="17" y="16" width="1" height="1" fill="#008080"/><rect x="50" y="6" width="1" height="1" fill="#008080"/><rect x="79" y="8" width="1" height="1" fill="#008080"/><rect x="21" y="7" width="1" height="1" fill="#008080"/><rect x="88" y="13" width="1" height="2" fill="#008080"/><rect x="62" y="3" width="2" height="1" fill="#008080"/><rect x="14" y="4" width="1" height="1" fill="#008080"/><rect x="5" y="9" width="1" height="1" fill="#008080"/><rect x="31" y="13" width="1" height="1" fill="#008080"/><rect x="77" y="16" width="1" height="1" fill="#008080"/><rect x="36" y="7" width="1" height="1" fill="#008080"/><rect x="27" y="1" width="1" height="1" fill="#008080"/><rect x="9" y="9" width="2" height="1" fill="#008080"/><rect x="12" y="12" width="1" height="1" fill="#008080"/><rect x="46" y="10" width="1" height="1" fill="#008080"/><rect x="94" y="10" width="1" height="2" fill="#008080"/><rect x="58" y="12" width="1" height="1" fill="#008080"/><rect x="95" y="2" width="1" height="1" fill="#008080"/><rect x="88" y="16" width="1" height="1" fill="#008080"/><rect x="10" y="14" width="2" height="1" fill="#008080"/><rect x="102" y="1" width="1" height="1" fill="#008080"/><rect x="80" y="13" width="1" height="1" fill="#008080"/><rect x="49" y="1" width="1" height="1" fill="#008080"/><rect x="30" y="4" width="1" height="1" fill="#008080"/><rect x="64" y="16" width="1" height="1" fill="#008080"/><rect x="97" y="11" width="1" height="1" fill="#008080"/><rect x="85" y="15" width="2" height="1" fill="#008080"/><rect x="64" y="8" width="1" height="1" fill="#008080"/><rect x="86" y="9" width="1" height="1" fill="#008080"/><rect x="103" y="7" width="1" height="1" fill="#008080"/><rect x="29" y="11" width="1" height="1" fill="#008080"/><rect x="61" y="9" width="1" height="1" fill="#008080"/><rect x="49" y="16" width="1" height="1" fill="#008080"/><rect x="92" y="15" width="2" height="1" fill="#008080"/><rect x="74" y="12" width="1" height="1" fill="#008080"/><rect x="40" y="1" width="1" height="1" fill="#008080"/><rect x="52" y="15" width="1" height="1" fill="#008080"/><rect x="58" y="4" width="1" height="2" fill="#008080"/><rect x="33" y="6" width="1" height="1" fill="#008080"/><rect x="92" y="1" width="1" height="1" fill="#008080"/><rect x="97" y="16" width="2" height="1" fill="#008080"/><rect x="35" y="12" width="1" height="1" fill="#008080"/><rect x="70" y="6" width="1" height="1" fill="#008080"/><rect x="84" y="7" width="1" height="1" fill="#008080"/><rect x="88" y="5" width="1" height="1" fill="#008080"/><rect x="67" y="15" width="1" height="1" fill="#008080"/><rect x="70" y="9" width="1" height="1" fill="#008080"/><rect x="74" y="16" width="2" height="1" fill="#008080"/><rect x="61" y="16" width="1" height="2" fill="#008080"/></svg>
<svg style="left:675px;top:360px" width="107" height="17" viewBox="0 0 107 17"><line x1="5.5" y1="1" x2="5.5" y2="17" stroke="#ff80c0" stroke-width="1"/><line x1="11.5" y1="1" x2="11.5" y2="17" stroke="#ff80c0" stroke-width="1"/><line x1="17.5" y1="1" x2="17.5" y2="17" stroke="#ff80c0" stroke-width="1"/><line x1="23.5" y1="1" x2="23.5" y2="17" stroke="#ff80c0" stroke-width="1"/><line x1="29.5" y1="1" x2="29.5" y2="17" stroke="#ff80c0" stroke-width="1"/><line x1="35.5" y1="1" x2="35.5" y2="17" stroke="#ff80c0" stroke-width="1"/><line x1="41.5" y1="1" x2="41.5" y2="17" stroke="#ff80c0" stroke-width="1"/><line x1="47.5" y1="1" x2="47.5" y2="17" stroke="#ff80c0" stroke-width="1"/><line x1="53.5" y1="1" x2="53.5" y2="17" stroke="#ff80c0" stroke-width="1"/><line x1="59.5" y1="1" x2="59.5" y2="17" stroke="#ff80c0" stroke-width="1"/><line x1="65.5" y1="1" x2="65.5" y2="17" stroke="#ff80c0" stroke-width="1"/><line x1="71.5" y1="1" x2="71.5" y2="17" stroke="#ff80c0" stroke-width="1"/><line x1="77.5" y1="1" x2="77.5" y2="17" stroke="#ff80c0" stroke-width="1"/><line x1="83.5" y1="1" x2="83.5" y2="17" stroke="#ff80c0" stroke-width="1"/><line x1="89.5" y1="1" x2="89.5" y2="17" stroke="#ff80c0" stroke-width="1"/><line x1="95.5" y1="1" x2="95.5" y2="17" stroke="#ff80c0" stroke-width="1"/><line x1="101.5" y1="1" x2="101.5" y2="17" stroke="#ff80c0" stroke-width="1"/><line x1="0" y1="6.5" x2="107" y2="6.5" stroke="#ff80c0" stroke-width="1"/><line x1="0" y1="12.5" x2="107" y2="12.5" stroke="#ff80c0" stroke-width="1"/></svg>
<svg style="left:245px;top:396px" width="106" height="17" viewBox="0 0 106 17"><line x1="2.5" y1="8.5" x2="102.5" y2="8.5" stroke="#ff00ff" stroke-width="5" stroke-dasharray="15.6 5.4 2.7 5.4" stroke-linecap="round"/></svg>
<div style="left:965px;top:122px;width:15px;height:315px;background:#f0f0f0;"></div>
<div style="left:965px;top:139px;width:15px;height:54px;background:#cdcdcd;"></div>
<svg style="left:968px;top:126px" width="10" height="10" viewBox="0 0 10 10"><polygon points="4.5,2 8,5.5 8,8 4.5,4.5 1,8 1,5.5" fill="#606060"/></svg>
<svg style="left:968px;top:426px" width="10" height="10" viewBox="0 0 10 10"><polygon points="1,2 4.5,5.5 8,2 8,4.5 4.5,8 1,4.5" fill="#606060"/></svg>
<div class="btn" style="left:30px;top:446px;width:88px;height:22px"></div>
<span class="t" style="left:68.15px;top:450.19px;font-size:11px;line-height:14px;color:#000;letter-spacing:-0.678px;">All</span>
<div class="btn" style="left:126px;top:446px;width:88px;height:22px"></div>
<span class="t" style="left:156.25px;top:450.19px;font-size:11px;line-height:14px;color:#000;letter-spacing:-0.399px;">None</span>
<div class="btn" style="left:222px;top:446px;width:88px;height:22px"></div>
<span class="t" style="left:250.50px;top:450.19px;font-size:11px;line-height:14px;color:#000;letter-spacing:0.414px;">Invert</span>
<div class="btn" style="left:318px;top:446px;width:88px;height:22px"></div>
<span class="t" style="left:336.20px;top:450.19px;font-size:11px;line-height:14px;color:#000;letter-spacing:-0.218px;">Expand All</span>
<div style="left:32px;top:480px;width:383px;height:69px;background:#fff;border:1px solid #dcdcdc;"></div>
<span class="t" style="left:50.70px;top:487.19px;font-size:11px;line-height:14px;color:#000;letter-spacing:-0.170px;">Categories</span>
<span class="t" style="left:106.20px;top:487.19px;font-size:11px;line-height:14px;color:#000;letter-spacing:0.060px;">that</span>
<span class="t" style="left:128.80px;top:487.19px;font-size:11px;line-height:14px;color:#000;letter-spacing:-0.302px;">are</span>
<span class="t" style="left:147.80px;top:487.19px;font-size:11px;line-height:14px;color:#000;letter-spacing:0.168px;">not</span>
<span class="t" style="left:167.60px;top:487.19px;font-size:11px;line-height:14px;color:#000;letter-spacing:-0.168px;">overridden</span>
<span class="t" style="left:221.80px;top:487.19px;font-size:11px;line-height:14px;color:#000;letter-spacing:-0.269px;">are</span>
<span class="t" style="left:240.80px;top:487.19px;font-size:11px;line-height:14px;color:#000;letter-spacing:-0.274px;">drawn</span>
<span class="t" style="left:50.70px;top:500.19px;font-size:11px;line-height:14px;color:#000;letter-spacing:-0.323px;">according</span>
<span class="t" style="left:99.50px;top:500.19px;font-size:11px;line-height:14px;color:#000;letter-spacing:-0.244px;">to</span>
<span class="t" style="left:112.90px;top:500.19px;font-size:11px;line-height:14px;color:#000;letter-spacing:-0.283px;">Object</span>
<span class="t" style="left:147.00px;top:500.19px;font-size:11px;line-height:14px;color:#000;letter-spacing:-0.534px;">Style</span>
<span class="t" style="left:172.70px;top:500.19px;font-size:11px;line-height:14px;color:#000;letter-spacing:0.248px;">settings.</span>
<div class="btn" style="left:289px;top:493px;width:108px;height:22px"></div>
<span class="t" style="left:304.60px;top:497.19px;font-size:11px;line-height:14px;color:#000;letter-spacing:0.101px;">Object Styles...</span>
<div style="left:647px;top:448px;width:335px;height:51px;background:#fff;border:1px solid #dcdcdc;"></div>
<div style="left:654px;top:443px;width:106px;height:12px;background:#fff;"></div>
<span class="t" style="left:655.50px;top:442.19px;font-size:11px;line-height:14px;color:#000;letter-spacing:-0.097px;">Override Host Layers</span>
<div style="left:658px;top:459px;width:13px;height:13px;background:#fff;border:1px solid #707070"></div>
<span class="t" style="left:674.00px;top:458.19px;font-size:11px;line-height:14px;color:#000;letter-spacing:-0.199px;">Cut Line Styles</span>
<div style="left:863px;top:459px;width:108px;height:22px;background:#efefef;border:1px solid #d9d9d9"></div>
<span class="t" style="left:901.45px;top:463.19px;font-size:11px;line-height:14px;color:#838383;letter-spacing:0.139px;">Edit...</span>
<div class="btn" style="left:679px;top:576px;width:73px;height:21px;border-color:#3399ff"></div>
<span class="t" style="left:707.20px;top:580.19px;font-size:11px;line-height:14px;color:#000;letter-spacing:-0.553px;">OK</span>
<div class="btn" style="left:760px;top:576px;width:73px;height:21px;border-color:#acacac"></div>
<span class="t" style="left:779.55px;top:580.19px;font-size:11px;line-height:14px;color:#000;letter-spacing:-0.392px;">Cancel</span>
<div class="btn" style="left:841px;top:576px;width:73px;height:21px;border-color:#acacac"></div>
<span class="t" style="left:863.50px;top:580.19px;font-size:11px;line-height:14px;color:#000;letter-spacing:-0.106px;">Apply</span>
<div class="btn" style="left:922px;top:576px;width:73px;height:21px;border-color:#acacac"></div>
<span class="t" style="left:946.90px;top:580.19px;font-size:11px;line-height:14px;color:#000;letter-spacing:-0.256px;">Help</span>
<div style="left:998px;top:595px;width:2px;height:2px;background:#bfbfbf;"></div>
<div style="left:998px;top:598px;width:2px;height:2px;background:#bfbfbf;"></div>
<div style="left:998px;top:601px;width:2px;height:2px;background:#bfbfbf;"></div>
<div style="left:995px;top:598px;width:2px;height:2px;background:#bfbfbf;"></div>
<div style="left:995px;top:601px;width:2px;height:2px;background:#bfbfbf;"></div>
<div style="left:992px;top:601px;width:2px;height:2px;background:#bfbfbf;"></div>
</body></html>
